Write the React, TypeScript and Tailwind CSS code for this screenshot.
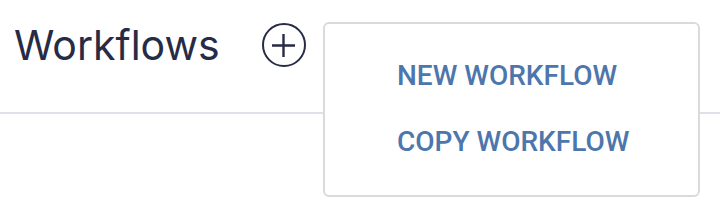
import { useState } from "react";

export default function App() {
  const [open] = useState(true);

  return (
    <div className="relative w-[720px] h-[222px] bg-white overflow-hidden">
      {/* Header */}
      <div className="h-[114px] border-b-2 border-[#dee0ee]">
        <div className="flex items-center pl-[14px] pt-[21px] gap-[42px]">
          <h1 className="text-[41px] leading-[48px] text-[#272b45] font-['Inter',sans-serif]">
            Workflows
          </h1>
          <button className="w-[44px] h-[44px] rounded-full border-[2.5px] border-[#272b45] flex items-center justify-center text-[#272b45]">
            <svg width="23" height="23" viewBox="0 0 23 23" fill="none">
              <path
                d="M11.5 0v23M0 11.5h23"
                stroke="currentColor"
                strokeWidth="2.4"
              />
            </svg>
          </button>
        </div>
      </div>

      {/* Dropdown menu */}
      {open && (
        <div className="absolute left-[323px] top-[22px] w-[377px] h-[175px] bg-white border-2 border-[#dadada] rounded-md flex flex-col pl-[72px] pt-[34px] gap-[30px] font-['Roboto',sans-serif] font-medium text-[28px] leading-[36px] text-[#4c76ac]">
          <button className="text-left">NEW WORKFLOW</button>
          <button className="text-left">COPY WORKFLOW</button>
        </div>
      )}
    </div>
  );
}
